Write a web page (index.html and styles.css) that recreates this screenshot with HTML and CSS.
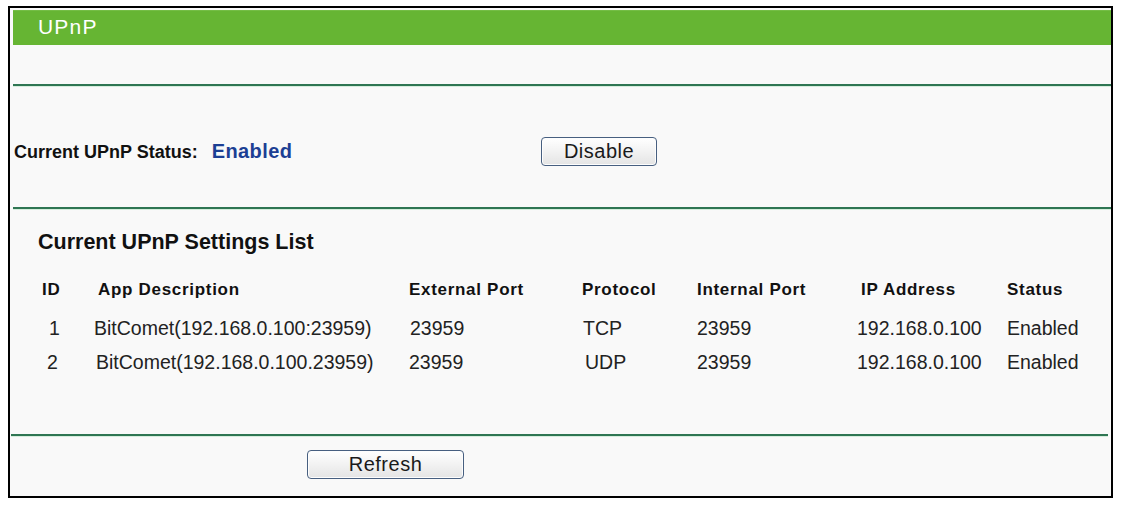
FILE: index.html
```html
<!DOCTYPE html>
<html>
<head>
<meta charset="utf-8">
<title>UPnP</title>
<link rel="stylesheet" href="styles.css">
</head>
<body>
<div class="panel">
  <div class="titlebar">UPnP</div>
  <div class="rule rule-top"></div>
  <div class="status-row">
    <div class="status-label">Current UPnP Status:<span class="status-value">Enabled</span></div>
    <button class="btn btn-disable">Disable</button>
  </div>
  <div class="rule"></div>
  <div class="list">
    <div class="list-title">Current UPnP Settings List</div>
    <div class="grid head">
      <div class="c-id">ID</div>
      <div class="c-app">App Description</div>
      <div class="c-ext">External Port</div>
      <div class="c-proto">Protocol</div>
      <div class="c-int">Internal Port</div>
      <div class="c-ip">IP Address</div>
      <div class="c-st">Status</div>
    </div>
    <div class="grid row">
      <div class="c-id">1</div>
      <div class="c-app">BitComet(192.168.0.100:23959)</div>
      <div class="c-ext">23959</div>
      <div class="c-proto">TCP</div>
      <div class="c-int">23959</div>
      <div class="c-ip">192.168.0.100</div>
      <div class="c-st">Enabled</div>
    </div>
    <div class="grid row row2">
      <div class="c-id">2</div>
      <div class="c-app">BitComet(192.168.0.100.23959)</div>
      <div class="c-ext">23959</div>
      <div class="c-proto">UDP</div>
      <div class="c-int">23959</div>
      <div class="c-ip">192.168.0.100</div>
      <div class="c-st">Enabled</div>
    </div>
  </div>
  <div class="rule rule-bottom"></div>
  <div class="actions">
    <button class="btn btn-refresh">Refresh</button>
  </div>
</div>
</body>
</html>
```

FILE: styles.css
```css
html, body {
  margin: 0;
  padding: 0;
  background: #ffffff;
}
body {
  font-family: "Liberation Sans", Arial, sans-serif;
  color: #1a1a1a;
}
.panel {
  box-sizing: border-box;
  margin: 6px 0 0 8px;
  width: 1105px;
  height: 492px;
  border: 2px solid #000;
  background: #f9f9f9;
  display: flex;
  flex-direction: column;
}
.titlebar {
  margin: 2px 0 0 3px;
  height: 35px;
  box-sizing: border-box;
  padding: 0 0 4px 25px;
  line-height: 31px;
  background: #66b533;
  border-top: 1px solid #74bd45;
  color: #ffffff;
  font-size: 21px;
  letter-spacing: 1.2px;
}
.rule {
  margin-left: 3px;
  height: 2px;
  background: #2f7653;
  border-bottom: 1px solid #d6eedd;
}
.rule-top {
  margin-top: 39px;
}
.rule-bottom {
  margin: 55px 3px 0 1px;
}
.status-row {
  box-sizing: border-box;
  height: 120px;
  padding-top: 9px;
  display: flex;
  align-items: center;
}
.status-label {
  width: 527px;
  padding-left: 4px;
  font-size: 18px;
  font-weight: bold;
  color: #111;
}
.status-value {
  margin-left: 14px;
  font-size: 20px;
  letter-spacing: 0.4px;
  color: #1c3f94;
}
.btn {
  box-sizing: border-box;
  height: 29px;
  padding: 0 0 1px;
  border: 1px solid #475f80;
  border-radius: 4px;
  background: linear-gradient(#ffffff, #f2f2f2 50%, #e4e4e4);
  box-shadow: inset 0 0 0 1px #fdfdfd;
  font-family: "Liberation Sans", Arial, sans-serif;
  font-size: 20px;
  letter-spacing: 0.5px;
  color: #1a1a1a;
}
.btn-disable {
  width: 116px;
}
.btn-refresh {
  width: 157px;
}
.list {
  padding-top: 19px;
}
.list-title {
  padding-left: 28px;
  font-size: 21.5px;
  font-weight: bold;
  line-height: 26px;
  color: #111;
}
.grid {
  display: grid;
  grid-template-columns: 52px 315px 173px 115px 160px 150px 1fr;
  padding-left: 32px;
  align-items: center;
}
.head {
  margin-top: 16px;
  height: 40px;
  padding-bottom: 2px;
  box-sizing: border-box;
  font-size: 17px;
  font-weight: bold;
  letter-spacing: 0.7px;
  color: #111;
}
.row {
  height: 34px;
  font-size: 19.5px;
  color: #222;
}
.head .c-app { padding-left: 4px; }
.head .c-ip { padding-left: 4px; }
.row .c-id { padding-left: 7px; }
.row .c-ext { padding-left: 1px; }
.row .c-proto { padding-left: 1px; }
.row2 .c-id { padding-left: 5px; }
.row2 .c-app { padding-left: 2px; }
.row2 .c-ext { padding-left: 0; }
.row2 .c-proto { padding-left: 3px; }
.actions {
  padding: 13px 0 0 297px;
}
```
